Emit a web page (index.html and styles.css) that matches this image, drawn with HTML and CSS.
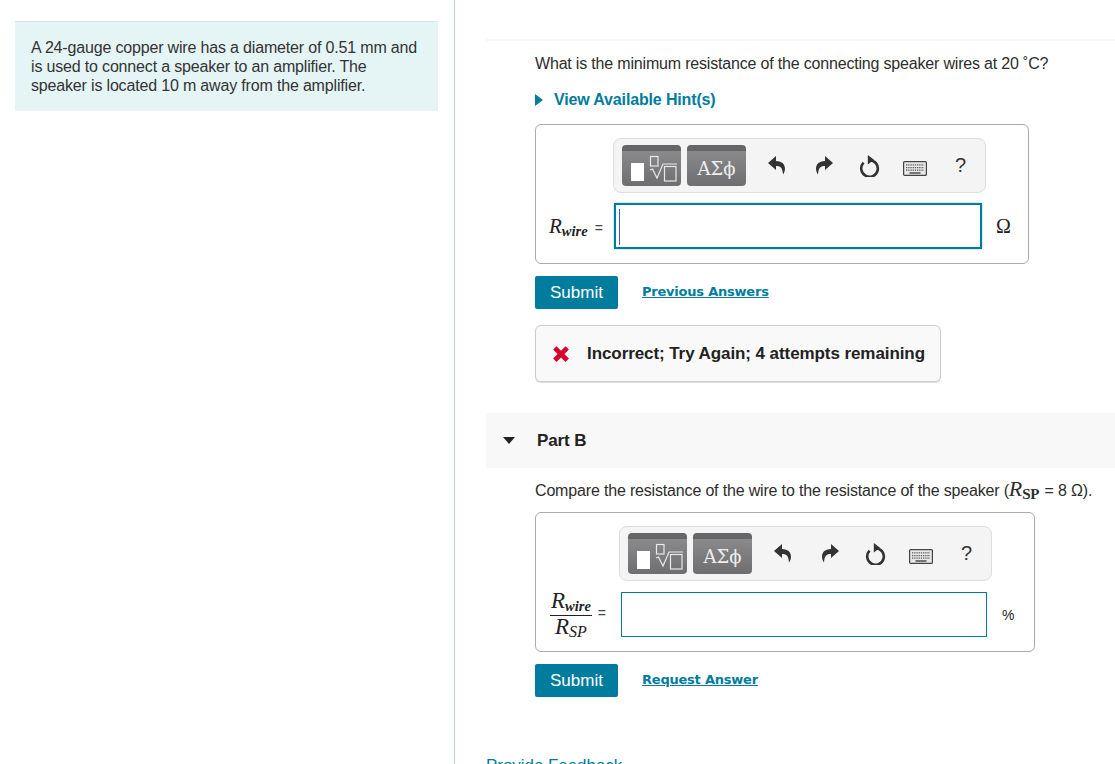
FILE: index.html
```html
<!DOCTYPE html>
<html lang="en">
<head>
<meta charset="utf-8">
<title>Part B</title>
<link rel="stylesheet" href="styles.css">
</head>
<body>
<svg class="defs" width="0" height="0" aria-hidden="true">
  <symbol id="i-undo" viewBox="0 0 18 19">
    <path d="M8 0 0 7l8 7v-4c4 0 6.500 1 7 8.500C18.500 14 18 5 8 5Z"/>
  </symbol>
  <symbol id="i-reload" viewBox="0 0 21 22">
    <path class="ring" d="M4.600 7.700A8.300 8.300 0 1 0 10.500 5.200"/>
    <path d="M8.800 0 15 4.800 8.800 9.500Z"/>
  </symbol>
  <symbol id="i-keys" viewBox="0 0 24 15">
    <rect class="kb" x=".6" y=".6" width="22.800" height="13.800" rx="1"/>
    <path class="keyrows" d="M3 3.800h18M3 6.600h18M3 9.200h18"/>
    <path class="keybar" d="M6.500 12h11"/>
  </symbol>
  <symbol id="i-root" viewBox="0 0 59 35">
    <rect class="solid" x="9" y="12" width="13" height="18"/>
    <rect class="hollow" x="28.500" y="5.500" width="7.500" height="9.500"/>
    <path class="hollow" d="M28 19l2.500-1 4.500 9 6-14h14"/>
    <rect class="hollow" x="42.500" y="15.500" width="11.500" height="14.500"/>
  </symbol>
</svg>
<div class="page">
  <aside class="left">
    <div class="intro">A 24-gauge copper wire has a diameter of 0.51 mm and is used to connect a speaker to an amplifier. The speaker is located 10 m away from the amplifier.</div>
  </aside>
  <main class="right">
    <section class="part-a">
      <p class="question">What is the minimum resistance of the connecting speaker wires at 20 ˚C?</p>
      <div class="hint"><span class="hint-arrow"></span><a>View Available Hint(s)</a></div>
      <div class="answer answer-a">
        <div class="toolbar">
          <span class="tool tool-root"><svg class="ic-root"><use href="#i-root"/></svg></span>
          <span class="tool tool-greek">ΑΣϕ</span>
          <span class="actions">
            <svg class="ic"><use href="#i-undo"/></svg>
            <svg class="ic flip"><use href="#i-undo"/></svg>
            <svg class="ic-reload"><use href="#i-reload"/></svg>
            <svg class="ic-keys"><use href="#i-keys"/></svg>
            <span class="help">?</span>
          </span>
        </div>
        <div class="row">
          <span class="label"><i class="r">R</i><i class="sub">wire</i> <span class="eq">=</span></span>
          <div class="input focused"><span class="caret"></span></div>
          <span class="unit">Ω</span>
        </div>
      </div>
      <div class="actions-row">
        <button class="submit">Submit</button>
        <a class="link">Previous Answers</a>
      </div>
      <div class="feedback">
        <svg class="cross" viewBox="0 0 16 16"><path d="M1 4 4 1 8 5 12 1 15 4 11 8 15 12 12 15 8 11 4 15 1 12 5 8Z"/></svg>
        <span class="feedback-text">Incorrect; Try Again; 4 attempts remaining</span>
      </div>
    </section>
    <header class="part-head"><span class="down"></span><h2>Part B</h2></header>
    <section class="part-b">
      <p class="compare">Compare the resistance of the wire to the resistance of the speaker (<i class="r">R</i><span class="sp">SP</span> = 8 Ω).</p>
      <div class="answer answer-b">
        <div class="toolbar">
          <span class="tool tool-root"><svg class="ic-root"><use href="#i-root"/></svg></span>
          <span class="tool tool-greek">ΑΣϕ</span>
          <span class="actions">
            <svg class="ic"><use href="#i-undo"/></svg>
            <svg class="ic flip"><use href="#i-undo"/></svg>
            <svg class="ic-reload"><use href="#i-reload"/></svg>
            <svg class="ic-keys"><use href="#i-keys"/></svg>
            <span class="help">?</span>
          </span>
        </div>
        <div class="row">
          <span class="label frac-label">
            <span class="frac">
              <span class="num"><i class="r">R</i><i class="sub">wire</i></span>
              <span class="den"><i class="r">R</i><i class="sub">SP</i></span>
            </span>
            <span class="eq">=</span>
          </span>
          <div class="input"></div>
          <span class="unit unit-pct">%</span>
        </div>
      </div>
      <div class="actions-row">
        <button class="submit">Submit</button>
        <a class="link">Request Answer</a>
      </div>
    </section>
    <a class="provide">Provide Feedback</a>
  </main>
</div>
</body>
</html>
```
FILE: styles.css
```css
* { box-sizing: border-box; }
html, body { margin: 0; height: 764px; overflow: hidden; background: #fff; }
body { font-family: "Liberation Sans", Arial, sans-serif; font-size: 16px; color: #2d2d2d; }
.defs { position: absolute; }
.page { display: flex; height: 764px; }

.left { width: 455px; flex: none; padding: 21px 16px 0 15px; border-right: 1px solid #b9cfe0; }
.intro { height: 90px; padding: 16px 16px 0; background: #e5f5f6; border-top: 1px solid #d5e6ea; line-height: 19px; letter-spacing: -.17px; color: #333; }

.right { flex: 1; min-width: 0; padding: 39px 0 0 31px; }
.part-a { border-top: 2px solid #f7f7f7; padding-left: 49px; }
.question { margin: 0; padding-top: 13px; line-height: 19px; letter-spacing: -.183px; }
.hint { display: flex; align-items: center; margin-top: 17px; line-height: 19px; font-weight: bold; color: #007c9e; letter-spacing: -.15px; }
.hint-arrow { width: 0; height: 0; border-style: solid; border-width: 6px 0 6px 8px; border-color: transparent transparent transparent #007c9e; margin-right: 11px; }

.answer { margin-top: 15px; height: 140px; border: 1px solid #aaa; border-radius: 6px; padding: 13px 0 0; }
.answer-a { width: 494px; }
.answer-b { width: 500px; margin-top: 11px; }
.toolbar { display: flex; align-items: center; height: 55px; width: 373px; padding: 0 8px; background: #f4f4f4; border: 1px solid #dedede; border-radius: 8px; }
.answer-a .toolbar { margin-left: 77px; }
.answer-b .toolbar { margin-left: 83px; }
.tool { display: flex; align-items: center; justify-content: center; height: 41px; border-radius: 4px; border-top: 6px solid #666; background: linear-gradient(#8a8a8c, #6e6e70); color: #eee; }
.tool-root { width: 59px; }
.tool-greek { width: 59px; margin-left: 6px; font-family: "DejaVu Serif", "Liberation Serif", serif; font-size: 18px; }
.ic-root { width: 59px; height: 35px; fill: none; }
.solid { fill: #fff; }
.hollow { fill: none; stroke: #e8e8e8; stroke-width: 1.200; }
.actions { display: flex; align-items: center; margin-left: 22px; color: #333; }
.ic { width: 18px; height: 19px; fill: #333; margin-right: 29px; }
.flip { transform: scaleX(-1); margin-right: 26px; }
.ic-reload { width: 21px; height: 22px; fill: #333; margin-right: 23px; }
.ring { fill: none; stroke: #333; stroke-width: 2.600; }
.ic-keys { width: 24px; height: 15px; margin-right: 28px; margin-top: 5px; }
.kb { fill: #e8e8e8; stroke: #444; stroke-width: 1.200; }
.keyrows { stroke: #555; stroke-width: 1.300; stroke-dasharray: 1.300 .9; fill: none; }
.keybar { stroke: #444; stroke-width: 1.400; }
.help { font-size: 20px; color: #333; }

.row { display: flex; align-items: center; margin-top: 10px; }
.label { font-family: "Liberation Serif", serif; width: 78px; padding-left: 13px; font-size: 21px; white-space: nowrap; color: #222; }
.r { font-style: italic; font-family: "Liberation Serif", serif; }
.sub { font-size: 14.500px; font-weight: bold; font-style: italic; font-family: "Liberation Serif", serif; position: relative; top: 3px; }
.eq { font-family: "Liberation Sans", sans-serif; font-size: 14px; margin-left: 2px; color: #444; }
.input { flex: none; height: 46px; border: 2px solid #007c9e; box-shadow: 0 0 2px #7fc0d2; background: #fff; padding: 4px 3px; }
.answer-a .input { width: 368px; }
.answer-b .input { width: 366px; height: 45px; border-width: 1px; box-shadow: none; }
.caret { display: block; width: 1px; height: 36px; background: #2a62d6; }
.unit { margin-left: 14px; font-family: "Liberation Serif", serif; font-size: 20px; color: #222; }
.unit-pct { font-family: "Liberation Sans", sans-serif; font-size: 14px; margin-left: 15px; }
.answer-b .row { margin-top: 11px; }
.frac-label { display: flex; align-items: center; width: 85px; height: 45px; padding-left: 14px; font-size: 23px; }
.frac { display: flex; flex-direction: column; align-items: center; }
.num { border-bottom: 1px solid #222; line-height: 22px; padding: 0 1px 1px; }
.den { line-height: 22px; }
.den .sub { font-weight: normal; font-size: 16px; }
.num .sub { font-size: 14.500px; }
.frac-label .eq { margin-left: 6px; margin-top: -3px; }

.actions-row { display: flex; align-items: center; margin-top: 12px; }
.submit { width: 83px; height: 33px; border: 0; border-radius: 2px; background: #007c9e; color: #fff; font: 17px "Liberation Sans", Arial, sans-serif; padding: 0; }
.link { margin: -3px 0 0 24px; font-family: "DejaVu Sans", sans-serif; font-size: 13px; font-weight: bold; letter-spacing: -.22px; color: #007c9e; text-decoration: underline; }
.feedback { display: flex; align-items: center; width: 406px; height: 57px; margin-top: 16px; padding-left: 16px; background: #f9f9f9; border: 1px solid #ccc; border-radius: 6px; box-shadow: 0 1px 1px #ddd; font-weight: bold; font-size: 17px; letter-spacing: -.08px; color: #222; }
.feedback-text { padding-top: 1px; }
.cross { width: 18px; height: 18px; fill: #d9002b; margin-right: 17px; flex: none; }

.part-head { display: flex; align-items: center; height: 55px; margin-top: 31px; padding-left: 17px; background: #f8f8f8; }
.down { width: 0; height: 0; border-style: solid; border-width: 7px 6.500px 0; border-color: #222 transparent transparent; margin-right: 21px; }
h2 { margin: 1px 0 0 1px; font-size: 17px; color: #222; letter-spacing: -.1px; }
.part-b { padding-left: 49px; }
.compare { margin: 0; padding-top: 13px; line-height: 19px; letter-spacing: -.17px; white-space: nowrap; }
.compare .r { font-size: 22px; line-height: 0; }
.sp { font-family: "Liberation Serif", serif; font-weight: bold; font-size: 15px; position: relative; top: 3px; margin-right: 1px; }
.provide { display: block; margin-top: 59px; color: #007c9e; font-size: 17px; letter-spacing: -.05px; text-decoration: underline; }
```
